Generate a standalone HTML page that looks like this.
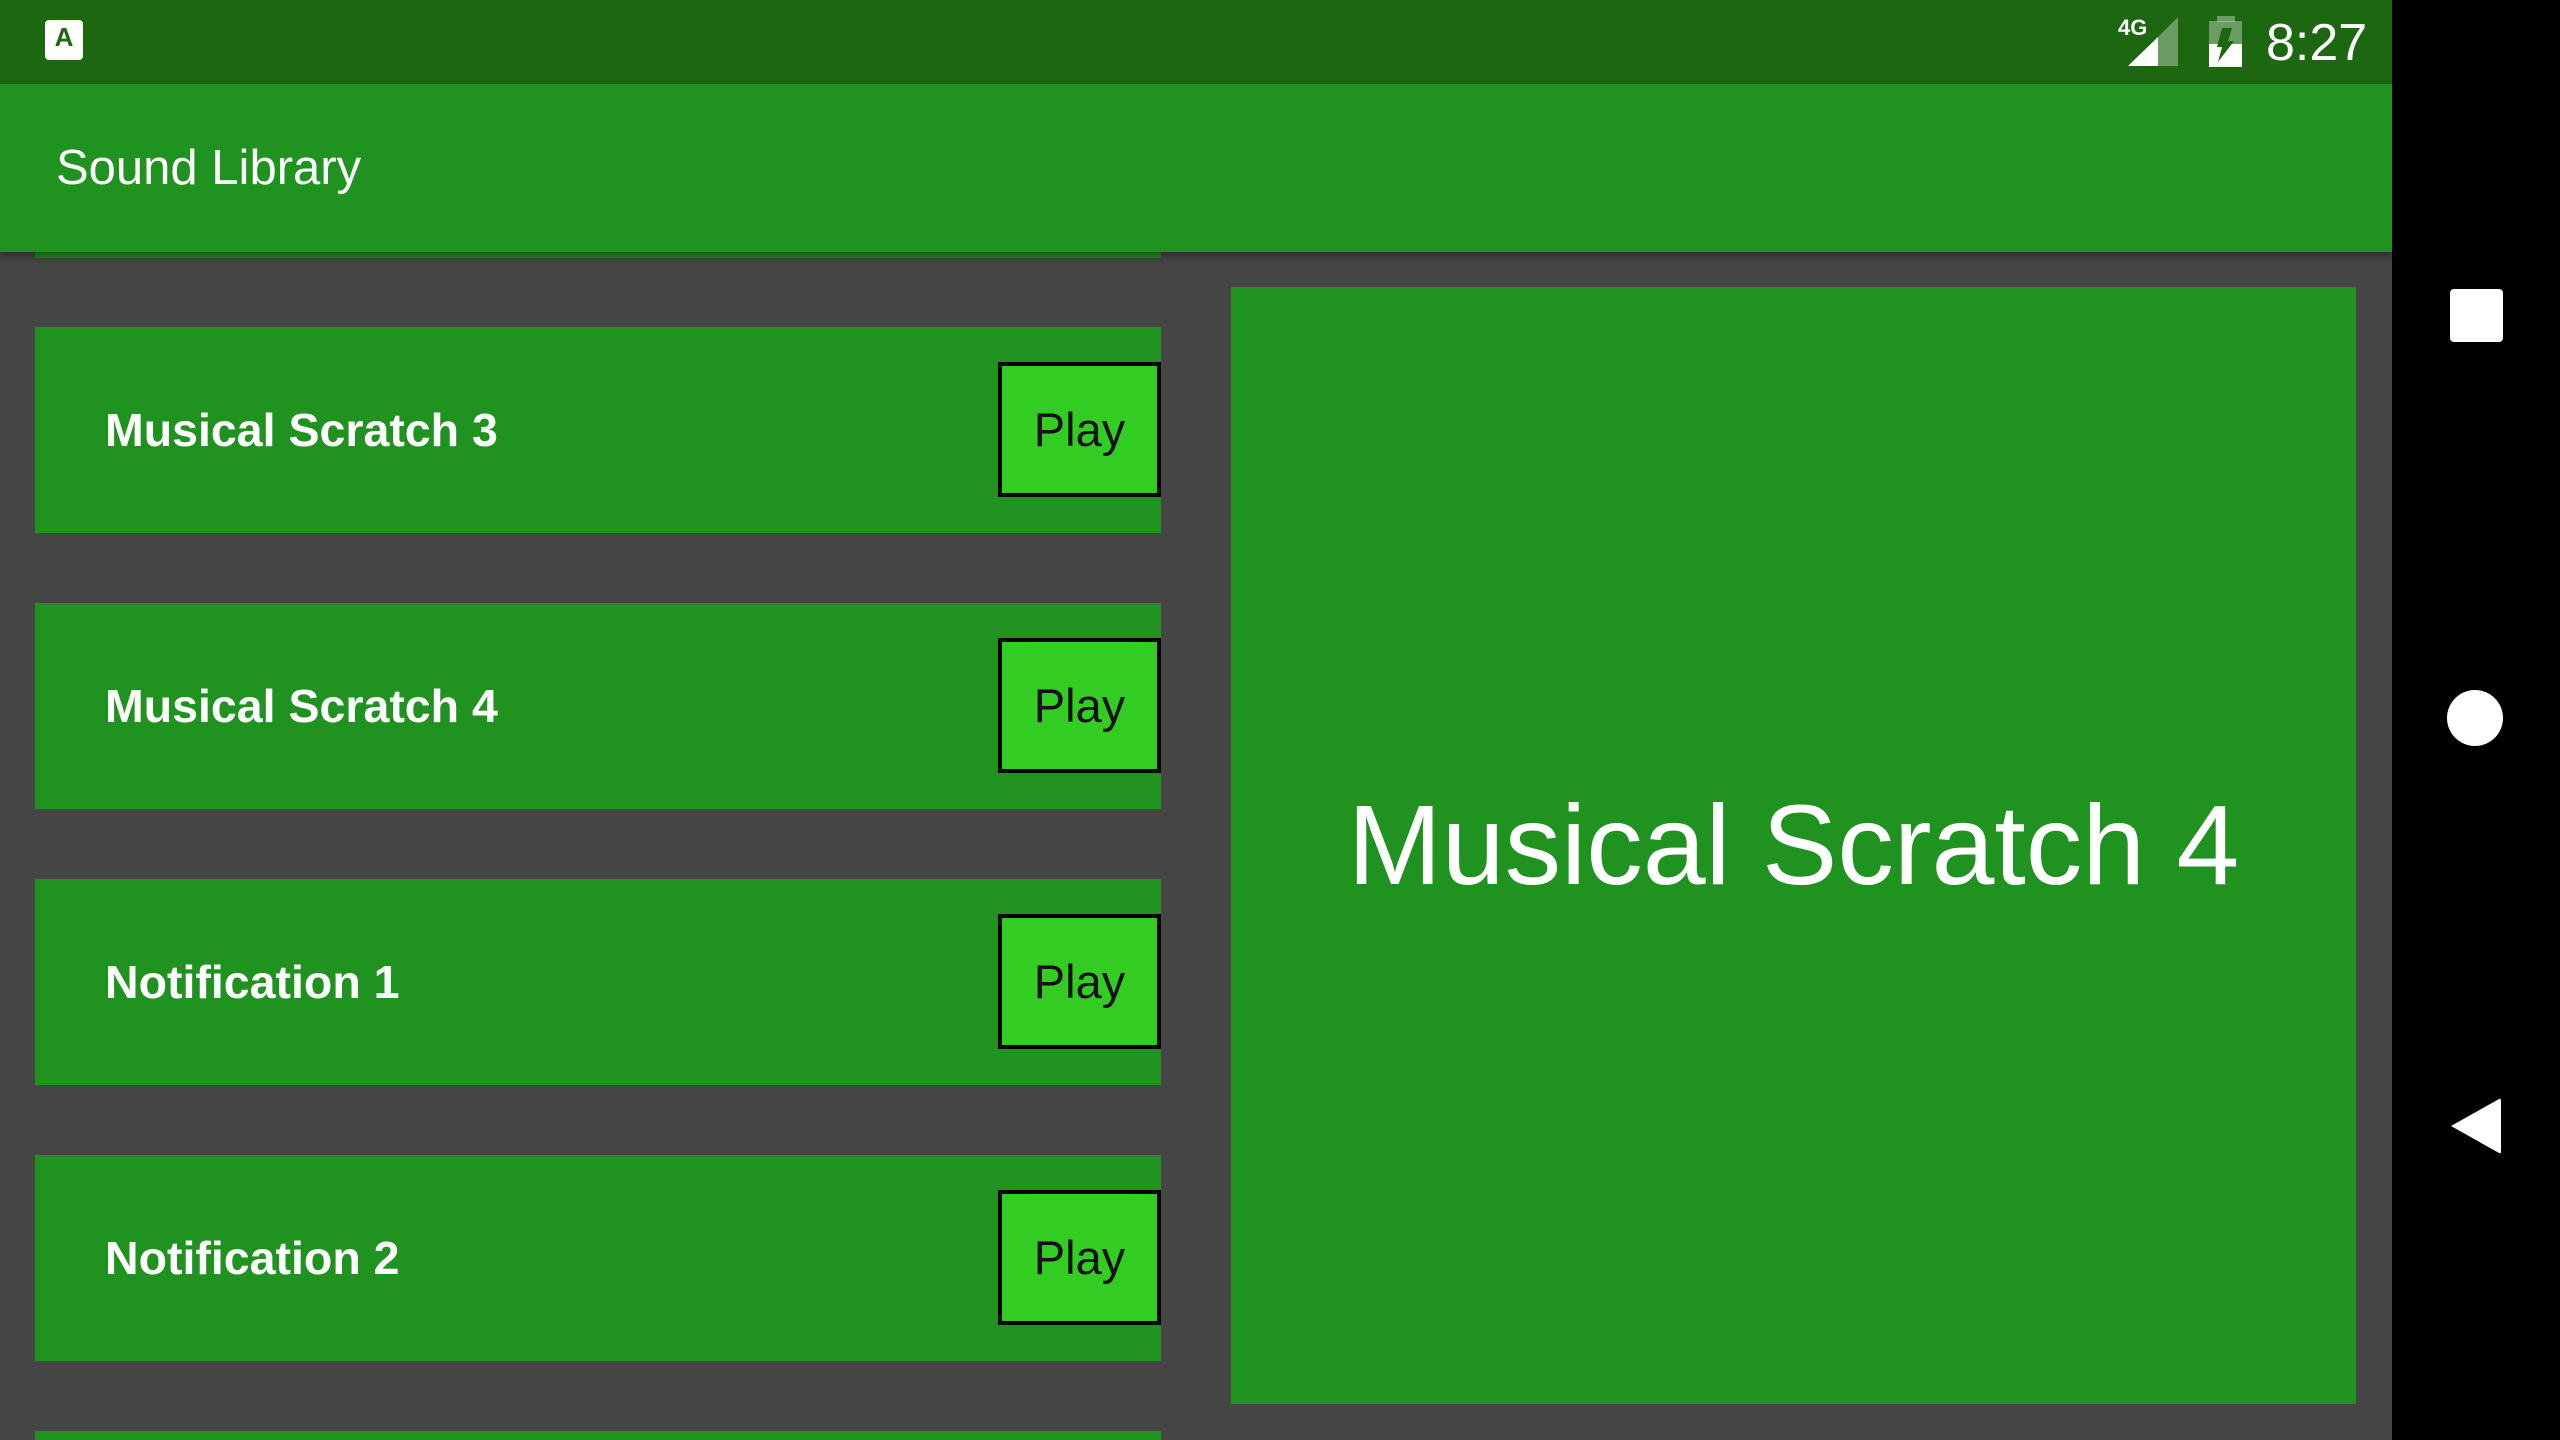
<!DOCTYPE html>
<html><head><meta charset="utf-8"><style>
*{margin:0;padding:0;box-sizing:border-box}
html,body{width:2560px;height:1440px;overflow:hidden}
body{background:#454545;font-family:"Liberation Sans",sans-serif}
#root{position:relative;width:2560px;height:1440px;overflow:hidden;background:#454545}
.abs{position:absolute}
.status{left:0;top:0;width:2392px;height:84px;background:#1c6710}
.appbar{left:0;top:84px;width:2392px;height:168px;background:#1f921f;box-shadow:0 4px 8px rgba(0,0,0,.35)}
.title{left:56px;top:84px;height:168px;line-height:168px;color:#fff;font-size:49px}
.item{left:35px;width:1126px;height:206px;background:#1f921f}
.item span{position:absolute;left:70px;top:0;line-height:206px;color:#fff;font-weight:bold;font-size:46.5px}
.play{position:absolute;left:963px;top:35px;width:163px;height:135px;background:#33cc22;border:4px solid #000;color:#111;font-size:47px;text-align:center;line-height:127px}
.panel{left:1231px;top:287px;width:1125px;height:1117px;background:#1f921f;color:#fff;font-size:113px;text-align:center;line-height:1117px}
.nav{left:2392px;top:0;width:168px;height:1440px;background:#000}
</style></head><body><div id="root">
<div class="abs status"></div>
<div class="abs" style="left:45px;top:20px;width:38px;height:40px;background:#fff;border-radius:4px;color:#1c6710;font-weight:bold;font-size:26px;text-align:center;line-height:34px">A</div>
<div class="abs" style="left:2118px;top:17px;color:#fff;font-weight:bold;font-size:22px;line-height:22px">4G</div>
<svg class="abs" style="left:2128px;top:17px" width="52" height="50"><polygon points="0,49 30,20 30,49" fill="#fff"/><polygon points="30,20 50,0 50,49 30,49" fill="#fff" opacity=".35"/></svg>
<svg class="abs" style="left:2209px;top:16px" width="34" height="52"><rect x="8" y="0" width="18" height="6" fill="#fff" opacity=".35"/><rect x="0" y="5" width="33" height="23" fill="#fff" opacity=".35"/><rect x="0" y="28" width="33" height="23" fill="#fff"/><polygon points="13,12 23,12 19,25 25,25 9,46 13,31 8,31" fill="#1c6710"/></svg>
<div class="abs" style="left:2266px;top:12px;color:#fff;font-size:52px;line-height:62px">8:27</div>
<div class="abs" style="left:35px;top:252px;width:1126px;height:6px;background:#1d8a1d"></div>
<div class="abs item" style="top:327px"><span>Musical Scratch 3</span><div class="play">Play</div></div>
<div class="abs item" style="top:603px"><span>Musical Scratch 4</span><div class="play">Play</div></div>
<div class="abs item" style="top:879px"><span>Notification 1</span><div class="play">Play</div></div>
<div class="abs item" style="top:1155px"><span>Notification 2</span><div class="play">Play</div></div>
<div class="abs item" style="top:1431px;height:9px"></div>
<div class="abs panel">Musical Scratch 4</div>
<div class="abs appbar"></div>
<div class="abs title">Sound Library</div>
<div class="abs nav"></div>
<div class="abs" style="left:2450px;top:289px;width:53px;height:53px;background:#fff;border-radius:4px"></div>
<div class="abs" style="left:2447px;top:690px;width:56px;height:56px;background:#fff;border-radius:50%"></div>
<svg class="abs" style="left:2449px;top:1097px" width="54" height="58"><path d="M2 29 L50 2 Q52 1 52 4 L52 54 Q52 57 50 56 Z" fill="#fff"/></svg>
</div></body></html>
